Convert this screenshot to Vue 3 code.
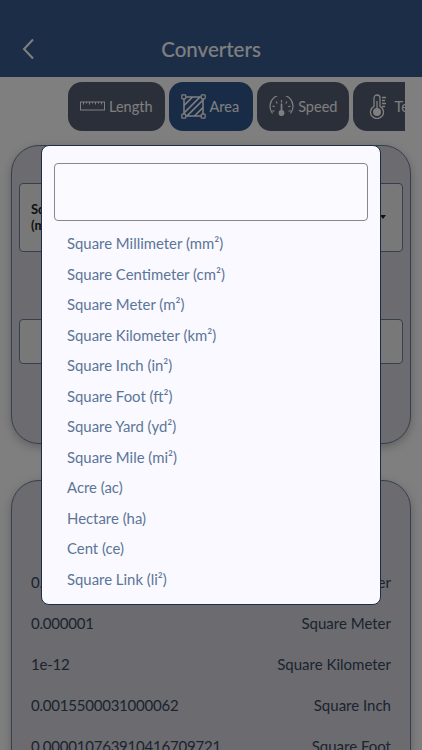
<script setup>
const tabs = [
  { name: 'Length', icon: 'ruler' },
  { name: 'Area', icon: 'area', active: true },
  { name: 'Speed', icon: 'speed' },
  { name: 'Temperature', icon: 'temp' },
]
const units = [
  'Square Millimeter (mm²)', 'Square Centimeter (cm²)', 'Square Meter (m²)', 'Square Kilometer (km²)',
  'Square Inch (in²)', 'Square Foot (ft²)', 'Square Yard (yd²)', 'Square Mile (mi²)',
  'Acre (ac)', 'Hectare (ha)', 'Cent (ce)', 'Square Link (li²)',
]
const results = [
  ['0.01', 'Square Centimeter'],
  ['0.000001', 'Square Meter'],
  ['1e-12', 'Square Kilometer'],
  ['0.0015500031000062', 'Square Inch'],
  ['0.000010763910416709721', 'Square Foot'],
]
</script>

<template>
  <div class="page">
    <header class="bar">
      <svg class="back" width="14" height="22" viewBox="0 0 14 22"><path d="M12 1.500 3 11l9 9.500" fill="none" stroke="currentColor" stroke-width="2" /></svg>
      <h1>Converters</h1>
    </header>
    <nav class="tabs">
      <div v-for="t in tabs" :key="t.name" class="tab" :class="[t.icon, { on: t.active }]">
        <svg v-if="t.icon === 'ruler'" class="ic" width="25" height="12" viewBox="0 0 25 12" fill="none" stroke="currentColor" stroke-width="1">
          <rect x="0.500" y="2" width="24" height="8" />
          <path d="M3.500 2v2.500M6.500 2v1.500M9.500 2v2.500M12.500 2v1.500M15.500 2v2.500M18.500 2v1.500M21.500 2v2.500" />
        </svg>
        <svg v-else-if="t.icon === 'area'" class="ic" width="25" height="25" viewBox="0 0 25 25" fill="none" stroke="currentColor" stroke-width="1.200">
          <rect x="3" y="3" width="19" height="19" stroke-width="1.500" />
          <path d="M3 11.500 11.500 3M3 19 19 3M6 22 22 6M13.500 22 22 13.500" stroke-width="1.700" />
          <rect x="0.800" y="0.800" width="4" height="4" rx="0.800" fill="#33588f" /><rect x="20.200" y="0.800" width="4" height="4" rx="0.800" fill="#33588f" />
          <rect x="0.800" y="20.200" width="4" height="4" rx="0.800" fill="#33588f" /><rect x="20.200" y="20.200" width="4" height="4" rx="0.800" fill="#33588f" />
        </svg>
        <svg v-else-if="t.icon === 'speed'" class="ic" width="25" height="20" viewBox="0 0 25 20" fill="none" stroke="currentColor" stroke-width="1.200">
          <path d="M3.500 17.500A11.500 11.500 0 1 1 21.500 17.500" />
          <path d="M12.500 4v2.500M7 5.500l1.300 2M18 5.500l-1.300 2M3.500 10l2.300.8M21.500 10l-2.300.8M3 15h2.500M22 15h-2.500" />
          <path d="M12.500 7.500v9" stroke-width="1.700" /><circle cx="12.500" cy="17" r="2.300" fill="currentColor" />
        </svg>
        <svg v-else class="ic" width="25" height="25" viewBox="0 0 25 25" fill="none" stroke="currentColor" stroke-width="1.300">
          <path d="M9 12.300V4a3 3 0 0 1 6 0v8.300a6.500 6.500 0 1 1-6 0Z" />
          <circle cx="12" cy="18" r="3.300" fill="currentColor" /><path d="M12 7v9M17 3.500h4M17 6.500h3M17 9.500h4M17 12.500h3" />
        </svg>
        <span>{{ t.name }}</span>
      </div>
    </nav>
    <section class="card first">
      <div class="box select">
        <span class="selected">Square Millimeter<br />(mm²)</span>
        <i class="caret"></i>
      </div>
      <div class="box field"></div>
    </section>
    <section class="card second">
      <div v-for="r in results" :key="r[1]" class="row"><span class="num">{{ r[0] }}</span><span>{{ r[1] }}</span></div>
    </section>

    <div class="scrim">
      <div class="modal">
        <div class="search"></div>
        <ul>
          <li v-for="u in units" :key="u">{{ u }}</li>
        </ul>
      </div>
    </div>
  </div>
</template>

<style scoped>
.page {
  position: relative;
  width: 422px;
  height: 750px;
  overflow: hidden;
  background: #fefefe;
  font-family: Lato, sans-serif;
  color: #1f2d3d;
}
.bar {
  height: 77px;
  background: #395b90;
  color: #fff;
  position: relative;
  display: flex;
  align-items: flex-end;
  justify-content: center;
  box-sizing: border-box;
  padding-bottom: 15px;
}
.bar h1 {
  margin: 0;
  font-size: 20.500px;
  font-weight: 500;
  line-height: 26px;
}
.back {
  position: absolute;
  left: 21px;
  top: 38px;
}
.tabs {
  display: flex;
  gap: 4px;
  margin: 5px 17px 0 68px;
  overflow: hidden;
}
.tab {
  flex: none;
  height: 48.500px;
  box-sizing: border-box;
  padding: 0 12px;
  border-radius: 14px;
  background: #555e72;
  color: #fff;
  display: flex;
  align-items: center;
  gap: 4px;
  font-size: 14.500px;
}
.tab.on {
  background: #33588f;
  padding-right: 14px;
}
.ic {
  flex: none;
}
.card {
  box-sizing: border-box;
  margin: 0 11px;
  width: 400px;
  border: 1.500px solid #6d7f9a;
  border-radius: 28px;
  background: #d7d7e1;
  box-shadow: 0 3px 10px rgba(0, 0, 0, .25);
  padding: 0 7px;
}
.first {
  height: 299px;
  margin-top: 14.500px;
  padding-top: 36.500px;
}
.second {
  height: 300px;
  margin-top: 36px;
  padding: 80px 19px 0;
}
.box {
  box-sizing: border-box;
  border: 1.500px solid #6d7f9a;
  border-radius: 4px;
  background: #f0f0f2;
}
.select {
  height: 69.500px;
  display: flex;
  align-items: center;
  justify-content: space-between;
  padding: 0 16px 0 11px;
  font-size: 13px;
  font-weight: 700;
  color: #222;
}
.selected {
  line-height: 16px;
}
.caret {
  border: 3px solid transparent;
  border-top: 4px solid #222;
  margin-top: 3px;
}
.field {
  height: 45px;
  margin-top: 66.500px;
}
.row {
  height: 41px;
  display: flex;
  align-items: center;
  justify-content: space-between;
  font-size: 15px;
  color: #38485c;
}
.num {
  letter-spacing: -.22px;
}
.scrim {
  position: absolute;
  inset: 0;
  background: rgba(0, 0, 0, .5);
}
.modal {
  position: absolute;
  left: 41px;
  top: 145px;
  width: 339.500px;
  height: 459.500px;
  box-sizing: border-box;
  background: #f9f9ff;
  border: 1px solid #1c2d47;
  border-radius: 8px;
  padding: 17px 12px 0;
}
.search {
  height: 57.500px;
  box-sizing: border-box;
  border: 1px solid #888;
  border-radius: 4px;
  background: #fafaff;
}
ul {
  list-style: none;
  margin: 7.500px 0 0;
  padding: 0 0 0 13px;
}
li {
  height: 30.550px;
  line-height: 30.550px;
  font-size: 14.900px;
  color: #5c7597;
}
</style>
